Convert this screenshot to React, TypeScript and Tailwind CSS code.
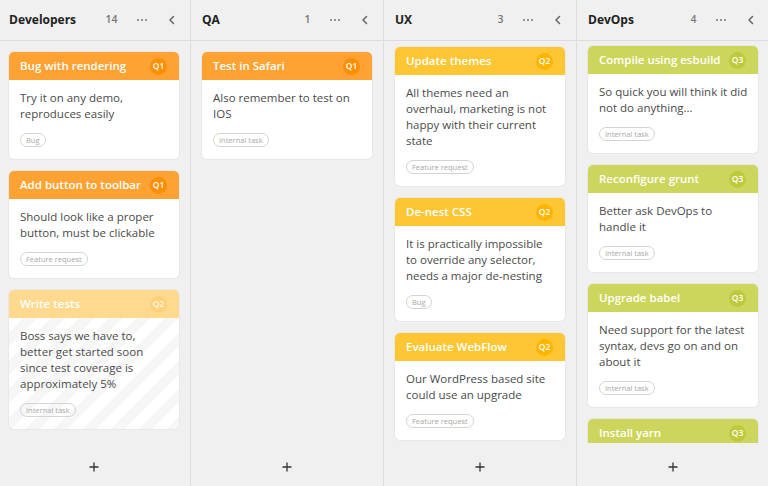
import React from "react";

type Task = { title: string; body: string[]; tag?: string; q: string; faded?: boolean };
type Col = { name: string; count: number; pt: string; color: "orange" | "yellow" | "lime"; tasks: Task[] };

const cols: Col[] = [
  {
    name: "Developers",
    count: 14,
    pt: "pt-[11px]",
    color: "orange",
    tasks: [
      { title: "Bug with rendering", body: ["Try it on any demo,", "reproduces easily"], tag: "Bug", q: "Q1" },
      { title: "Add button to toolbar", body: ["Should look like a proper", "button, must be clickable"], tag: "Feature request", q: "Q1" },
      {
        title: "Write tests",
        body: ["Boss says we have to,", "better get started soon", "since test coverage is", "approximately 5%"],
        tag: "Internal task",
        q: "Q2",
        faded: true,
      },
    ],
  },
  {
    name: "QA",
    count: 1,
    pt: "pt-[11px]",
    color: "orange",
    tasks: [{ title: "Test in Safari", body: ["Also remember to test on", "IOS"], tag: "Internal task", q: "Q1" }],
  },
  {
    name: "UX",
    count: 3,
    pt: "pt-[6px]",
    color: "yellow",
    tasks: [
      {
        title: "Update themes",
        body: ["All themes need an", "overhaul, marketing is not", "happy with their current", "state"],
        tag: "Feature request",
        q: "Q2",
      },
      {
        title: "De-nest CSS",
        body: ["It is practically impossible", "to override any selector,", "needs a major de-nesting"],
        tag: "Bug",
        q: "Q2",
      },
      { title: "Evaluate WebFlow", body: ["Our WordPress based site", "could use an upgrade"], tag: "Feature request", q: "Q2" },
    ],
  },
  {
    name: "DevOps",
    count: 4,
    pt: "pt-[5px]",
    color: "lime",
    tasks: [
      { title: "Compile using esbuild", body: ["So quick you will think it did", "not do anything..."], tag: "Internal task", q: "Q3" },
      { title: "Reconfigure grunt", body: ["Better ask DevOps to", "handle it"], tag: "Internal task", q: "Q3" },
      {
        title: "Upgrade babel",
        body: ["Need support for the latest", "syntax, devs go on and on", "about it"],
        tag: "Internal task",
        q: "Q3",
      },
      { title: "Install yarn", body: [], q: "Q3" },
    ],
  },
];

function Card({ t, color }: { t: Task; color: Col["color"] }) {
  let head = "bg-[#ffa234]";
  let badge = "bg-[#ff8f00]";
  if (color === "yellow") {
    head = "bg-[#ffc634]";
    badge = "bg-[#ffb400]";
  } else if (color === "lime") {
    head = "bg-[#cdd65c]";
    badge = "bg-[#bec93b]";
  }
  if (t.faded) {
    head = "bg-[#ffd98e]";
    badge = "bg-[#ffd07a]";
  }
  return (
    <div
      className={
        "shrink-0 rounded-[5px] overflow-hidden shadow-[0_0_0_1px_#e8e8e8] " +
        (t.faded ? "bg-[repeating-linear-gradient(135deg,#ffffff_0px,#ffffff_10px,#f6f6f6_10px,#f6f6f6_20px)]" : "bg-white")
      }
    >
      <div className={"h-[28px] flex items-center justify-between pl-[11px] pr-[12px] " + head}>
        <span className="text-white text-[11.5px] font-semibold whitespace-nowrap">{t.title}</span>
        <span
          className={
            "w-[17px] h-[17px] shrink-0 rounded-full flex items-center justify-center text-[8.5px] font-semibold " +
            badge +
            (t.faded ? " text-white/80" : " text-white")
          }
        >
          {t.q}
        </span>
      </div>
      {t.tag ? (
        <div className="px-[11px] pt-[10px] pb-[12px]">
          <div className="text-[11.5px] leading-[16px] text-[#4a4a4a] whitespace-nowrap">
            {t.body.map((l, i) => (
              <div key={i}>{l}</div>
            ))}
          </div>
          <div className="mt-[11px] flex">
            <span className="h-[14px] px-[5px] rounded-full border border-[#d4d4d4] text-[7.5px] leading-[12px] text-[#a8a8a8] flex items-center">
              {t.tag}
            </span>
          </div>
        </div>
      ) : (
        <div className="h-[60px]" />
      )}
    </div>
  );
}

function Column({ c }: { c: Col }) {
  return (
    <div className="w-[193px] shrink-0 h-full flex flex-col border-r border-[#dcdcdc]">
      <div className="h-[41px] shrink-0 flex items-center border-b border-[#dcdcdc] pl-[11px] pr-[14px]">
        <span className="font-bold text-[12px] text-[#222]">{c.name}</span>
        <span className="ml-auto text-[10.5px] font-semibold text-[#777]">{c.count}</span>
        <span className="ml-[19px] flex gap-[1.5px] items-center">
          <span className="w-[2.5px] h-[2.5px] rounded-full bg-[#777]" />
          <span className="w-[2.5px] h-[2.5px] rounded-full bg-[#777]" />
          <span className="w-[2.5px] h-[2.5px] rounded-full bg-[#777]" />
        </span>
        <svg className="ml-[21px]" width="8" height="10" viewBox="0 0 8 10">
          <path d="M5.5 1.5 L2 5 L5.5 8.5" fill="none" stroke="#666" strokeWidth="1.5" strokeLinecap="round" strokeLinejoin="round" />
        </svg>
      </div>
      <div className="flex-1 overflow-hidden">
        <div className={"flex flex-col gap-[12px] px-[11px] " + c.pt}>
          {c.tasks.map((t, i) => (
            <Card key={i} t={t} color={c.color} />
          ))}
        </div>
      </div>
      <div className="h-[43px] shrink-0 flex items-center justify-center pt-[5px]">
        <svg width="10" height="10" viewBox="0 0 10 10">
          <path d="M5 0.5 V9.5 M0.5 5 H9.5" stroke="#333" strokeWidth="1.3" />
        </svg>
      </div>
    </div>
  );
}

export default function App() {
  return (
    <div
      className="w-[768px] h-[486px] overflow-hidden bg-[#f0f0f0]"
      style={{ fontFamily: '"Open Sans", "DejaVu Sans", sans-serif' }}
    >
      <div className="flex h-full -ml-[2px]">
        {cols.map((c) => (
          <Column key={c.name} c={c} />
        ))}
      </div>
    </div>
  );
}
